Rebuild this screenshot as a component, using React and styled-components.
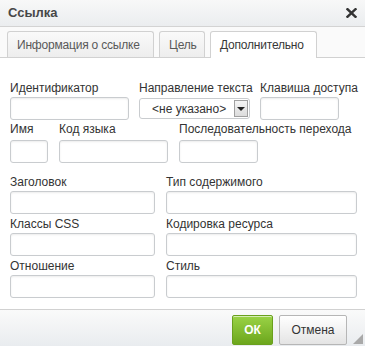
import React from "react";
import styled, { createGlobalStyle } from "styled-components";

const Global = createGlobalStyle`
  html, body { margin: 0; padding: 0; background: #fff; }
  body { font-family: "Liberation Sans", Arial, sans-serif; font-size: 12px; color: #333; }
  * { box-sizing: border-box; }
`;

const Dialog = styled.div`
  width: 365px;
  height: 346px;
  display: flex;
  flex-direction: column;
  background: #fff;
  overflow: hidden;
`;

const TitleBar = styled.div`
  height: 27px;
  flex: none;
  display: flex;
  align-items: center;
  justify-content: space-between;
  padding: 0 8px 0 8px;
  background: linear-gradient(#f8f8f8, #ebedef);
  border-bottom: 1px solid #d3d3d3;
`;

const Title = styled.div`
  font-size: 13px;
  font-weight: bold;
  color: #474747;
  padding-bottom: 1px;
`;

const Close = styled.svg`
  width: 11px;
  height: 10px;
  margin-bottom: 1px;
`;

const Tabs = styled.div`
  flex: none;
  display: flex;
  gap: 5px;
  padding: 5px 7px 0;
  height: 31px;
  background: #fafafa;
  border-bottom: 1px solid #d1d1d1;
  align-items: flex-end;
`;

const Tab = styled.div`
  width: ${(p) => p.$w}px;
  padding: 0 0 0 9px;
  display: flex;
  align-items: center;
  white-space: nowrap;
  letter-spacing: -0.2px;
  border: 1px solid #d1d1d1;
  border-bottom: none;
  border-radius: 3px 3px 0 0;
  background: ${(p) => (p.$active ? "#fff" : "linear-gradient(#fafafa, #ededed)")};
  color: ${(p) => (p.$active ? "#383838" : "#595959")};
  font-size: 12px;
  margin-bottom: ${(p) => (p.$active ? "-1px" : "0")};
  height: ${(p) => (p.$active ? "27px" : "26px")};
  padding-bottom: ${(p) => (p.$active ? "1px" : "0")};
`;

const Body = styled.div`
  flex: 1;
  padding: 23px 8px 0 10px;
  display: flex;
  flex-direction: column;
`;

const Row = styled.div`
  display: grid;
  grid-template-columns: ${(p) => p.$cols};
  column-gap: ${(p) => p.$gap || 10}px;
  margin-top: ${(p) => p.$top || 0}px;
`;

const Field = styled.div`
  display: flex;
  flex-direction: column;
`;

const Label = styled.label`
  display: block;
  line-height: 15px;
  height: 15px;
  white-space: nowrap;
  color: #333;
  margin-bottom: ${(p) => p.$mb ?? 1}px;
`;

const Input = styled.div`
  height: 23px;
  border: 1px solid #c9cccf;
  border-radius: 3px;
  background: #fff;
  box-shadow: inset 0 1px 2px rgba(0, 0, 0, 0.08);
`;

const Select = styled.div`
  height: 21px;
  margin-top: 1px;
  border: 1px solid #c9cccf;
  border-radius: 3px;
  background: #fff;
  display: flex;
  align-items: center;
  padding-left: 12px;
  position: relative;
  color: #333;
`;

const SelectArrow = styled.div`
  position: absolute;
  right: 1px;
  top: 1px;
  bottom: 1px;
  width: 14px;
  border: 1px solid #a0a0a0;
  background: linear-gradient(#f4f4f4, #dcdcdc);
  display: flex;
  align-items: center;
  justify-content: center;
  &::after {
    content: "";
    border-left: 4px solid transparent;
    border-right: 4px solid transparent;
    border-top: 4px solid #222;
  }
`;

const Footer = styled.div`
  flex: none;
  height: 37px;
  border-top: 1px solid #d1d1d1;
  background: linear-gradient(#fafafa, #e9ecef);
  display: flex;
  justify-content: flex-end;
  align-items: flex-start;
  padding: 5px 18px 0 0;
  gap: 6px;
  position: relative;
`;

const Button = styled.div`
  height: 30px;
  width: ${(p) => p.$w}px;
  border: 1px solid ${(p) => (p.$ok ? "#6aa01e" : "#b6b6b6")};
  border-radius: 2px;
  background: ${(p) =>
    p.$ok ? "linear-gradient(#9ad346, #6ca61c)" : "linear-gradient(#fff, #e4e4e4)"};
  color: ${(p) => (p.$ok ? "#fff" : "#333")};
  font-weight: ${(p) => (p.$ok ? "bold" : "normal")};
  font-size: 12px;
  display: flex;
  align-items: center;
  justify-content: center;
  box-shadow: 0 1px 0 rgba(255, 255, 255, 0.6) inset;
`;

const Grip = styled.div`
  position: absolute;
  right: 2px;
  bottom: 2px;
  width: 0;
  height: 0;
  border-left: 10px solid transparent;
  border-bottom: 10px solid #a9a9a9;
`;

export default function App() {
  return (
    <>
      <Global />
      <Dialog>
        <TitleBar>
          <Title>Ссылка</Title>
          <Close viewBox="0 0 11 10">
            <path d="M1.5 1.2 L9.5 8.8 M9.5 1.2 L1.5 8.8" stroke="#333" strokeWidth="2.4" strokeLinecap="square" />
          </Close>
        </TitleBar>
        <Tabs>
          <Tab $w={147}>Информация о ссылке</Tab>
          <Tab $w={46}>Цель</Tab>
          <Tab $w={107} $active>Дополнительно</Tab>
        </Tabs>
        <Body>
          <Row $cols="119px 111px 79px" $gap={10}>
            <Field>
              <Label>Идентификатор</Label>
              <Input />
            </Field>
            <Field>
              <Label>Направление текста</Label>
              <Select>
                &lt;не указано&gt;
                <SelectArrow />
              </Select>
            </Field>
            <Field>
              <Label>Клавиша доступа</Label>
              <Input />
            </Field>
          </Row>
          <Row $cols="38px 109px 79px" $gap={11} $top={2}>
            <Field>
              <Label $mb={3}>Имя</Label>
              <Input />
            </Field>
            <Field>
              <Label $mb={3}>Код языка</Label>
              <Input />
            </Field>
            <Field>
              <Label $mb={3}>Последовательность перехода</Label>
              <Input />
            </Field>
          </Row>
          <Row $cols="145px 191px" $gap={11} $top={12}>
            <Field>
              <Label>Заголовок</Label>
              <Input />
            </Field>
            <Field>
              <Label>Тип содержимого</Label>
              <Input />
            </Field>
          </Row>
          <Row $cols="145px 191px" $gap={11} $top={3}>
            <Field>
              <Label>Классы CSS</Label>
              <Input />
            </Field>
            <Field>
              <Label>Кодировка ресурса</Label>
              <Input />
            </Field>
          </Row>
          <Row $cols="145px 191px" $gap={11} $top={3}>
            <Field>
              <Label>Отношение</Label>
              <Input />
            </Field>
            <Field>
              <Label>Стиль</Label>
              <Input />
            </Field>
          </Row>
        </Body>
        <Footer>
          <Button $ok $w={41}>ОК</Button>
          <Button $w={68}>Отмена</Button>
          <Grip />
        </Footer>
      </Dialog>
    </>
  );
}
